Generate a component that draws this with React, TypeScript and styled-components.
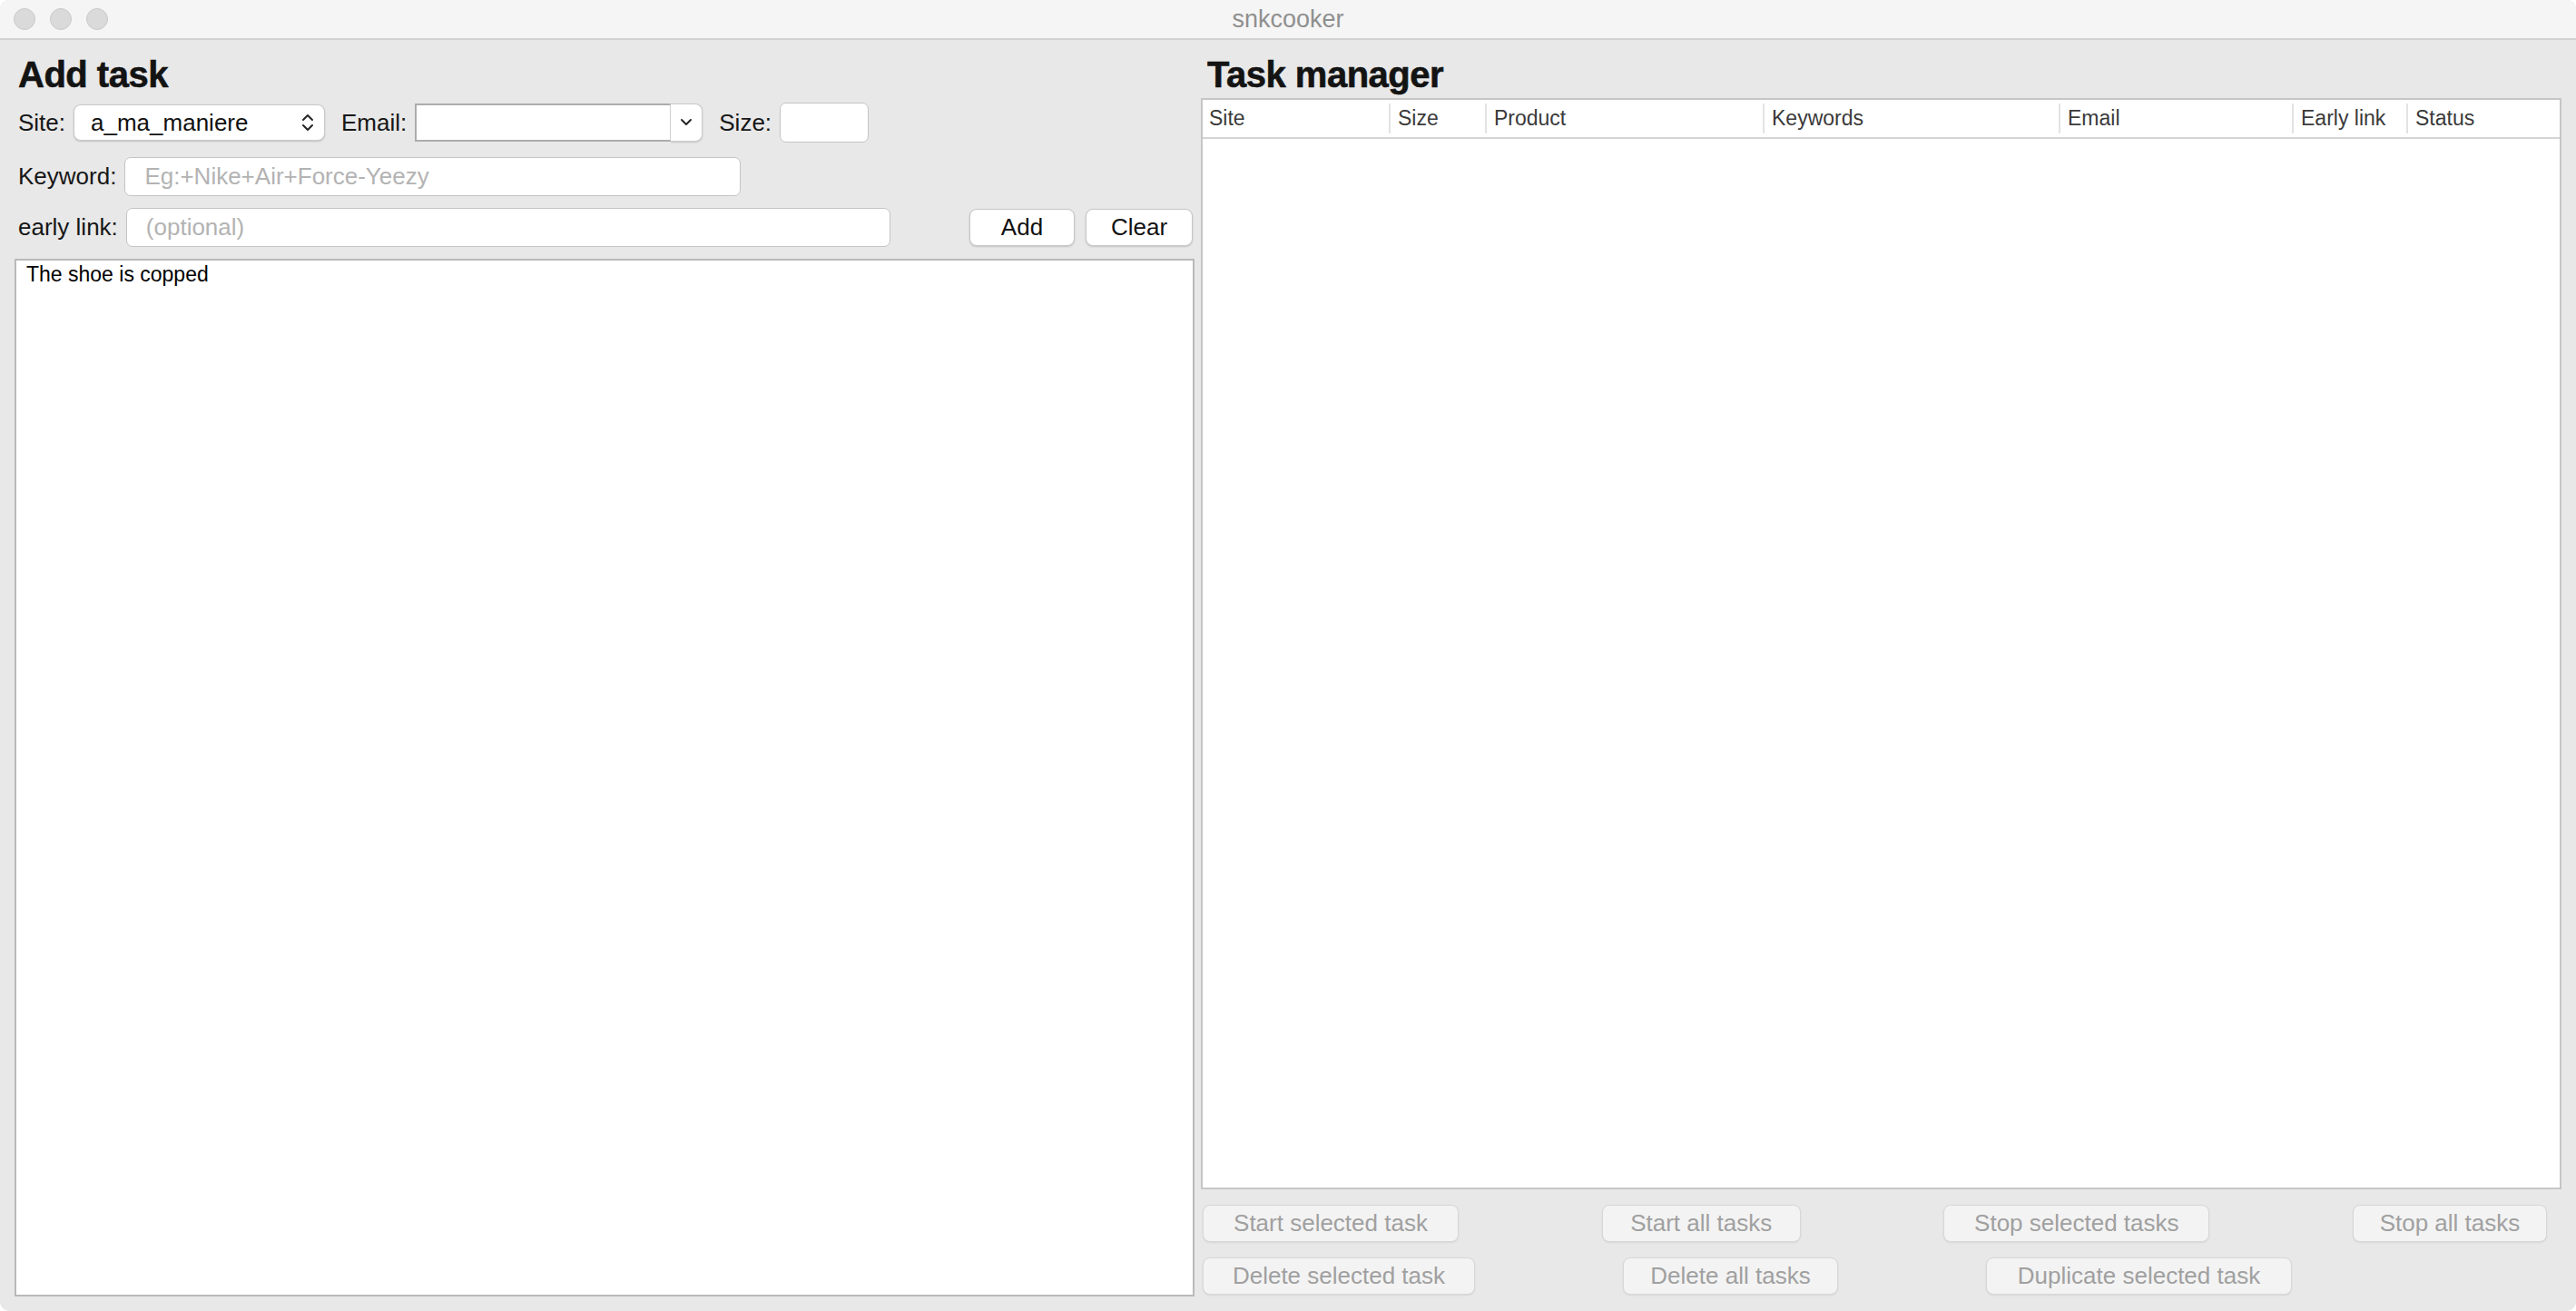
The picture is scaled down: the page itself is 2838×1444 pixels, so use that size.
import React from "react";
import styled, { createGlobalStyle } from "styled-components";

const Global = createGlobalStyle`
  html, body { margin: 0; padding: 0; background: #ffffff; }
  body { font-family: "Liberation Sans", Arial, sans-serif; }
  * { box-sizing: border-box; }
`;

const Window = styled.div`
  width: 2838px;
  height: 1444px;
  border-radius: 10px;
  overflow: hidden;
  background: #e8e8e8;
  display: flex;
  flex-direction: column;
`;

const TitleBar = styled.div`
  height: 44px;
  flex: none;
  background: #f5f5f5;
  border-bottom: 2px solid #d2d2d2;
  display: grid;
  grid-template-columns: 1fr auto 1fr;
  align-items: center;
`;

const Lights = styled.div`
  display: flex;
  gap: 16px;
  padding-left: 15px;
`;

const Light = styled.span`
  width: 24px;
  height: 24px;
  border-radius: 50%;
  background: #dadada;
  border: 1px solid #c9c9c9;
`;

const Title = styled.div`
  font-size: 27px;
  color: #8f8f8f;
`;

const Body = styled.div`
  flex: 1;
  display: flex;
  gap: 7px;
  padding: 16px 16px 16px 16px;
  min-height: 0;
`;

const LeftPane = styled.div`
  width: 1300px;
  flex: none;
  display: flex;
  flex-direction: column;
`;

const RightPane = styled.div`
  flex: 1;
  display: flex;
  flex-direction: column;
  padding-bottom: 2px;
  min-width: 0;
`;

const Heading = styled.h1<{ $indent: number }>`
  margin: 0;
  padding-left: ${(p) => p.$indent}px;
  font-size: 40px;
  line-height: 44px;
  font-weight: 700;
  color: #131313;
  letter-spacing: -0.5px;
  -webkit-text-stroke: 0.6px #131313;
`;

const FormRow = styled.div<{ $top: number; $h: number }>`
  display: flex;
  align-items: center;
  height: ${(p) => p.$h}px;
  margin-top: ${(p) => p.$top}px;
  padding-left: 4px;
`;

const Field = styled.div<{ $ml?: number }>`
  display: flex;
  align-items: center;
  gap: 9px;
  margin-left: ${(p) => p.$ml ?? 0}px;
`;

const Label = styled.span`
  font-size: 26px;
  color: #161616;
  white-space: nowrap;
`;

const Popup = styled.div`
  width: 277px;
  height: 40px;
  background: #ffffff;
  border: 1px solid #c9c9c9;
  border-radius: 8px;
  box-shadow: 0 1px 2px rgba(0, 0, 0, 0.18);
  display: flex;
  align-items: center;
  justify-content: space-between;
  padding: 0 10px 0 18px;
  font-size: 26px;
  color: #111;
`;

const Combo = styled.div`
  width: 317px;
  height: 42px;
  display: flex;
`;

const ComboEdit = styled.div`
  flex: 1;
  background: #ffffff;
  border: 2px solid #acacac;
  border-right: 1px solid #d8d8d8;
`;

const ComboButton = styled.div`
  width: 35px;
  background: #ffffff;
  border: 1px solid #cacaca;
  border-left: none;
  border-radius: 0 8px 8px 0;
  box-shadow: 0 1px 2px rgba(0, 0, 0, 0.15);
  display: flex;
  align-items: center;
  justify-content: center;
`;

const TextInput = styled.div<{ $w: number; $h: number }>`
  width: ${(p) => p.$w}px;
  height: ${(p) => p.$h}px;
  background: #ffffff;
  border: 1px solid #c4c4c4;
  border-radius: 7px;
  display: flex;
  align-items: center;
  padding-left: 21px;
  font-size: 26px;
`;

const Placeholder = styled.span`
  color: #b3b3b3;
`;

const Actions = styled.div`
  margin-left: auto;
  display: flex;
  gap: 12px;
  padding-right: 2px;
`;

const Button = styled.div<{ $w: number; $disabled?: boolean }>`
  width: ${(p) => p.$w}px;
  height: 41px;
  display: flex;
  align-items: center;
  justify-content: center;
  font-size: 26px;
  white-space: nowrap;
  border-radius: 8px;
  background: ${(p) => (p.$disabled ? "#f3f3f3" : "#ffffff")};
  color: ${(p) => (p.$disabled ? "#a0a0a0" : "#111111")};
  border: 1px solid ${(p) => (p.$disabled ? "#d7d7d7" : "#c6c6c6")};
  box-shadow: 0 1px 2px rgba(0, 0, 0, ${(p) => (p.$disabled ? 0.08 : 0.16)});
`;

const Output = styled.div`
  flex: 1;
  margin-top: 13px;
  background: #ffffff;
  border: 2px solid #b9b9b9;
  padding: 1px 11px;
  font-size: 23px;
  line-height: 28px;
  color: #000;
`;

const Table = styled.div`
  flex: 1;
  margin-top: 4px;
  background: #ffffff;
  border: 2px solid #c6c6c6;
  display: flex;
  flex-direction: column;
`;

const HeaderRow = styled.div`
  display: grid;
  grid-template-columns: 205px 106px 306px 326px 257px 126px 1fr;
  height: 43px;
  align-items: center;
  border-bottom: 2px solid #d5d5d5;
`;

const HeaderCell = styled.div<{ $first?: boolean }>`
  height: 33px;
  display: flex;
  align-items: center;
  padding-left: ${(p) => (p.$first ? 7 : 8)}px;
  border-left: ${(p) => (p.$first ? "none" : "2px solid #e3e3e3")};
  font-size: 23px;
  color: #3a3a3a;
  white-space: nowrap;
`;

const ButtonRow = styled.div<{ $spread?: boolean }>`
  display: flex;
  margin-top: 17px;
  padding: 0 16px 0 2px;
  justify-content: ${(p) => (p.$spread ? "space-between" : "flex-start")};
  gap: ${(p) => (p.$spread ? 0 : 163)}px;
`;

const UpDown = () => (
  <svg width="16" height="24" viewBox="0 0 16 24" fill="none">
    <path d="M3 9 L8 4 L13 9" stroke="#262626" strokeWidth="2" strokeLinecap="round" strokeLinejoin="round" />
    <path d="M3 15 L8 20 L13 15" stroke="#262626" strokeWidth="2" strokeLinecap="round" strokeLinejoin="round" />
  </svg>
);

const Down = () => (
  <svg width="16" height="10" viewBox="0 0 16 10" fill="none">
    <path d="M3 2 L8 7 L13 2" stroke="#262626" strokeWidth="2" strokeLinecap="round" strokeLinejoin="round" />
  </svg>
);

const columns = ["Site", "Size", "Product", "Keywords", "Email", "Early link", "Status"];

export default function App() {
  return (
    <>
      <Global />
      <Window>
        <TitleBar>
          <Lights>
            <Light />
            <Light />
            <Light />
          </Lights>
          <Title>snkcooker</Title>
          <div />
        </TitleBar>
        <Body>
          <LeftPane>
            <Heading $indent={4}>Add task</Heading>
            <FormRow $top={9} $h={44}>
              <Field>
                <Label>Site:</Label>
                <Popup>
                  <span>a_ma_maniere</span>
                  <UpDown />
                </Popup>
              </Field>
              <Field $ml={18}>
                <Label>Email:</Label>
                <Combo>
                  <ComboEdit />
                  <ComboButton>
                    <Down />
                  </ComboButton>
                </Combo>
              </Field>
              <Field $ml={18}>
                <Label>Size:</Label>
                <TextInput $w={98} $h={44} />
              </Field>
            </FormRow>
            <FormRow $top={16} $h={43}>
              <Field>
                <Label>Keyword:</Label>
                <TextInput $w={679} $h={43}>
                  <Placeholder>Eg:+Nike+Air+Force-Yeezy</Placeholder>
                </TextInput>
              </Field>
            </FormRow>
            <FormRow $top={13} $h={43}>
              <Field>
                <Label>early link:</Label>
                <TextInput $w={842} $h={43}>
                  <Placeholder>(optional)</Placeholder>
                </TextInput>
              </Field>
              <Actions>
                <Button $w={116}>Add</Button>
                <Button $w={118}>Clear</Button>
              </Actions>
            </FormRow>
            <Output>The shoe is copped</Output>
          </LeftPane>
          <RightPane>
            <Heading $indent={7}>Task manager</Heading>
            <Table>
              <HeaderRow>
                {columns.map((c, i) => (
                  <HeaderCell key={c} $first={i === 0}>
                    {c}
                  </HeaderCell>
                ))}
              </HeaderRow>
            </Table>
            <ButtonRow $spread>
              <Button $w={282} $disabled>Start selected task</Button>
              <Button $w={219} $disabled>Start all tasks</Button>
              <Button $w={293} $disabled>Stop selected tasks</Button>
              <Button $w={214} $disabled>Stop all tasks</Button>
            </ButtonRow>
            <ButtonRow>
              <Button $w={300} $disabled>Delete selected task</Button>
              <Button $w={237} $disabled>Delete all tasks</Button>
              <Button $w={337} $disabled>Duplicate selected task</Button>
            </ButtonRow>
          </RightPane>
        </Body>
      </Window>
    </>
  );
}
